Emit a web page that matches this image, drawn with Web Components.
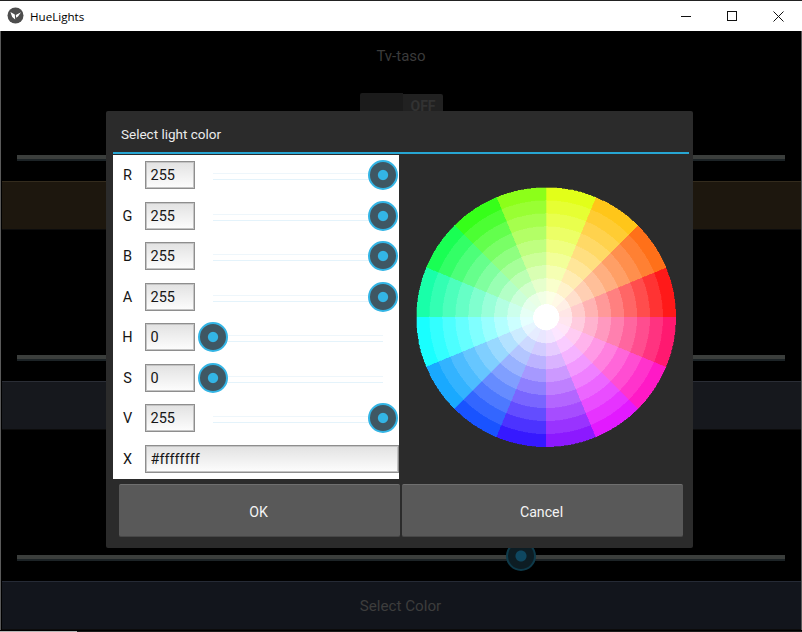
<!DOCTYPE html>
<html lang="en">
<head>
<meta charset="utf-8">
<title>HueLights</title>
<style>
html,body{margin:0;padding:0;background:#000;}
body{font-family:Roboto,"Liberation Sans",sans-serif;}
</style>
</head>
<body>
<hue-app>
  <title-bar slot="title">HueLights</title-bar>
  <bg-label>Tv-taso</bg-label>
  <bg-toggle></bg-toggle>
  <bg-control tint="#1d170e" edge="#332b1d" value="50"></bg-control>
  <bg-control tint="#16181d" edge="#2a2d35" value="50"></bg-control>
  <bg-control tint="#12151c" edge="#252a35" value="65.66" text="Select Color"></bg-control>
  <color-dialog slot="overlay" heading="Select light color">
    <color-row label="R" value="255" at="end"></color-row>
    <color-row label="G" value="255" at="end"></color-row>
    <color-row label="B" value="255" at="end"></color-row>
    <color-row label="A" value="255" at="end"></color-row>
    <color-row label="H" value="0" at="start"></color-row>
    <color-row label="S" value="0" at="start"></color-row>
    <color-row label="V" value="255" at="end"></color-row>
    <color-row label="X" value="#ffffffff" wide></color-row>
    <color-wheel slot="wheel"></color-wheel>
    <dialog-button slot="buttons">OK</dialog-button>
    <dialog-button slot="buttons">Cancel</dialog-button>
  </color-dialog>
</hue-app>
<script>
const shadow = (el, html) => { el.attachShadow({mode:'open'}).innerHTML = html; };

customElements.define('hue-app', class extends HTMLElement {
  constructor(){ super(); shadow(this, `<style>
    :host{display:flex;flex-direction:column;position:relative;width:802px;height:632px;overflow:hidden;background:#000;box-sizing:border-box;border-top:1px solid #222;}
    .main{flex:1;min-height:0;display:flex;flex-direction:column;border-left:1px solid #5a5a5a;border-right:1px solid #5a5a5a;overflow:hidden;}
    .strip{height:2px;flex:none;background:linear-gradient(to right,#000 0 100%) top/100% 1px no-repeat,linear-gradient(to right,#b5b5b5 0 77px,#1c1c1c 77px) bottom/100% 1px no-repeat;}
    .overlay{position:absolute;left:106px;top:110px;}
  </style>
  <slot name="title"></slot>
  <div class="main"><slot></slot></div>
  <div class="strip"></div>
  <div class="overlay"><slot name="overlay"></slot></div>`); }
});

customElements.define('title-bar', class extends HTMLElement {
  constructor(){ super(); shadow(this, `<style>
    :host{display:flex;align-items:center;height:30px;background:#fff;color:#000;font:11.6px "Open Sans","Noto Sans",sans-serif;flex:none;}
    .logo{margin:-1px 6.5px 0 6.5px;flex:none;display:block;}
    .title{flex:1;}
    .ctl{width:46px;height:30px;display:flex;align-items:center;justify-content:center;flex:none;}
    svg.i{display:block;}
  </style>
  <svg class="logo" width="17" height="17" viewBox="0 0 17 17"><circle cx="8.5" cy="8.5" r="8" fill="#4d4d4d"/><path d="M3.4 5 L7.8 7.6 L8.2 12.6 L5.2 10 Z M8.8 8 L14 5.2 L11 9.4 L9.2 10.8 Z" fill="#fff"/></svg>
  <span class="title"><slot></slot></span>
  <span class="ctl"><svg class="i" width="10" height="10" viewBox="0 0 10 10"><path d="M0 5.5H10" stroke="#111" fill="none"/></svg></span>
  <span class="ctl"><svg class="i" width="10" height="10" viewBox="0 0 10 10"><rect x=".5" y=".5" width="9" height="9" stroke="#111" fill="none"/></svg></span>
  <span class="ctl" style="margin-right:1px"><svg class="i" width="11" height="11" viewBox="0 0 11 11"><path d="M.5.5L10.5 10.5M10.5.5L.5 10.5" stroke="#111" fill="none"/></svg></span>`); }
});

customElements.define('bg-label', class extends HTMLElement {
  constructor(){ super(); shadow(this, `<style>
    :host{display:flex;align-items:center;justify-content:center;height:50px;color:#3b3b3b;font:15px Roboto,sans-serif;flex:none;}
  </style><slot></slot>`); }
});

customElements.define('bg-toggle', class extends HTMLElement {
  constructor(){ super(); shadow(this, `<style>
    :host{display:flex;justify-content:center;align-items:flex-start;height:62px;margin-top:12px;margin-left:1px;flex:none;box-sizing:border-box;}
    .a{width:43px;height:30px;background:#1b1b1b;border-radius:2px 0 0 2px;}
    .b{width:40px;height:28px;margin-top:1px;background:#212121;color:#323232;font:bold 14px Roboto,sans-serif;text-align:center;line-height:24px;border-radius:0 2px 2px 0;}
  </style><div class="a"></div><div class="b">OFF</div>`); }
});

customElements.define('bg-control', class extends HTMLElement {
  constructor(){ super();
    const t=this.getAttribute('tint'), e=this.getAttribute('edge'), v=this.getAttribute('value'), x=this.getAttribute('text')||'';
    shadow(this, `<style>
    :host{display:block;height:200px;flex:none;}
    .track{position:relative;height:6px;margin:0 16px;background:#3b3e3c;border-bottom:2px solid #1c2326;box-sizing:border-box;}
    .knob{position:absolute;top:-14px;left:${v}%;width:30px;height:30px;margin-left:-15px;border-radius:50%;box-sizing:border-box;border:2px solid #0e3a4a;background:radial-gradient(circle,#0e4760 0 5px,#0d1d24 6px);}
    .band{margin:20px 0 0 1px;height:49px;box-sizing:border-box;background:${t};border-top:1px solid ${e};display:flex;align-items:center;justify-content:center;color:#3d3d3d;font:15.2px Roboto,sans-serif;border-bottom:1px solid #0c0c0c;padding:1px 2px 0 0;}
  </style><div class="track"><div class="knob"></div></div><div class="band">${x}</div>`); }
});

customElements.define('color-dialog', class extends HTMLElement {
  constructor(){ super();
    shadow(this, `<style>
    :host{display:flex;flex-direction:column;width:587px;height:437px;box-sizing:border-box;background:#2b2b2b;border-radius:2px;padding:0 4px 0 7px;}
    .head{height:41px;display:flex;align-items:center;padding:4px 0 0 8px;box-sizing:border-box;color:#ececec;font:13.5px Roboto,sans-serif;flex:none;}
    .rule{height:2px;background:#27a6d3;flex:none;margin-bottom:1px;}
    .body{display:flex;height:324px;flex:none;}
    .panel{width:286px;flex:none;background:#fff;display:grid;grid-auto-rows:40.5px;}
    .right{flex:1;min-width:0;}
    .buttons{display:flex;gap:2px;margin:5px 0 0 6px;}
  </style>
  <div class="head">${this.getAttribute('heading')}</div>
  <div class="rule"></div>
  <div class="body"><div class="panel"><slot></slot></div><div class="right"><slot name="wheel"></slot></div></div>
  <div class="buttons"><slot name="buttons"></slot></div>`); }
});

customElements.define('color-row', class extends HTMLElement {
  constructor(){ super();
    const wide=this.hasAttribute('wide'), at=this.getAttribute('at');
    const slider = wide ? '' : `<div class="slider ${at}"><div class="knob"></div></div>`;
    shadow(this, `<style>
    :host{display:flex;align-items:center;height:40.5px;color:#161616;font:14.5px Roboto,sans-serif;}
    .label{width:29px;text-align:center;flex:none;margin-right:3px;padding-top:1px;}
    .field{width:${wide?'254px':'50px'};height:28px;box-sizing:border-box;border:1px solid #8e8e8e;box-shadow:inset 0 0 0 1px #c4c4c4;background:linear-gradient(#e2e2e2,#fdfdfd);padding:1px 0 0 4.5px;display:flex;align-items:center;flex:none;font-size:14.5px;}
    .slider{position:relative;flex:none;width:200px;height:30px;margin-left:2.5px;display:flex;}
    .slider::before{content:"";position:absolute;left:15px;right:15px;top:13px;height:7px;box-sizing:border-box;border-top:1px solid #eef6fb;border-bottom:1px solid #e4f3fb;}
    .slider.end{justify-content:flex-end;}
    .knob{position:relative;width:30px;height:30px;box-sizing:border-box;border-radius:50%;border:2.5px solid #33b5e5;background:radial-gradient(circle,#33b5e5 0 4.6px,#3f5763 5.6px);}
  </style>
  <div class="label">${this.getAttribute('label')}</div>
  <div class="field">${this.getAttribute('value')}</div>${slider}`); }
});

customElements.define('color-wheel', class extends HTMLElement {
  constructor(){ super();
    const R=129.7, cx=147.2, cy=162.2, rings=10, pies=16;
    const hsv=(h,s)=>{const f=n=>{const k=(n+h/60)%6;return Math.round(255*(1-s*Math.max(0,Math.min(k,4-k,1))));};return `rgb(${f(5)},${f(3)},${f(1)})`;};
    const pt=(r,a)=>`${(cx+r*Math.cos(a)).toFixed(2)} ${(cy-r*Math.sin(a)).toFixed(2)}`;
    let p='';
    /* outer rings first: each wedge runs to the centre and the next ring paints over it */
    for(let r=rings-1;r>=0;r--){
      for(let t=0;t<pies;t++){
        const r1=R*(r+1)/rings,a0=2*Math.PI*t/pies,a1=2*Math.PI*(t+1)/pies,c=hsv(360*t/pies,r/rings);
        p+=`<path d="M${cx} ${cy}L${pt(r1,a0)}A${r1} ${r1} 0 0 0 ${pt(r1,a1)}Z" fill="${c}" stroke="${c}" stroke-width=".3"/>`;
      }
    }
    shadow(this, `<style>:host{display:block;width:290px;height:324px;}svg{display:block;}</style>
    <svg width="290" height="324" viewBox="0 0 290 324" shape-rendering="crispEdges">${p}</svg>`); }
});

customElements.define('dialog-button', class extends HTMLElement {
  constructor(){ super(); shadow(this, `<style>
    :host{display:flex;align-items:center;justify-content:center;width:281px;height:53px;box-sizing:border-box;background:#595959;border-top:1px solid #6f6f6f;border-bottom:1px solid #474747;border-radius:2px;color:#f4f4f4;font:14.2px Roboto,sans-serif;padding:2px 2px 0 0;}
  </style><slot></slot>`); }
});
</script>
</body>
</html>
